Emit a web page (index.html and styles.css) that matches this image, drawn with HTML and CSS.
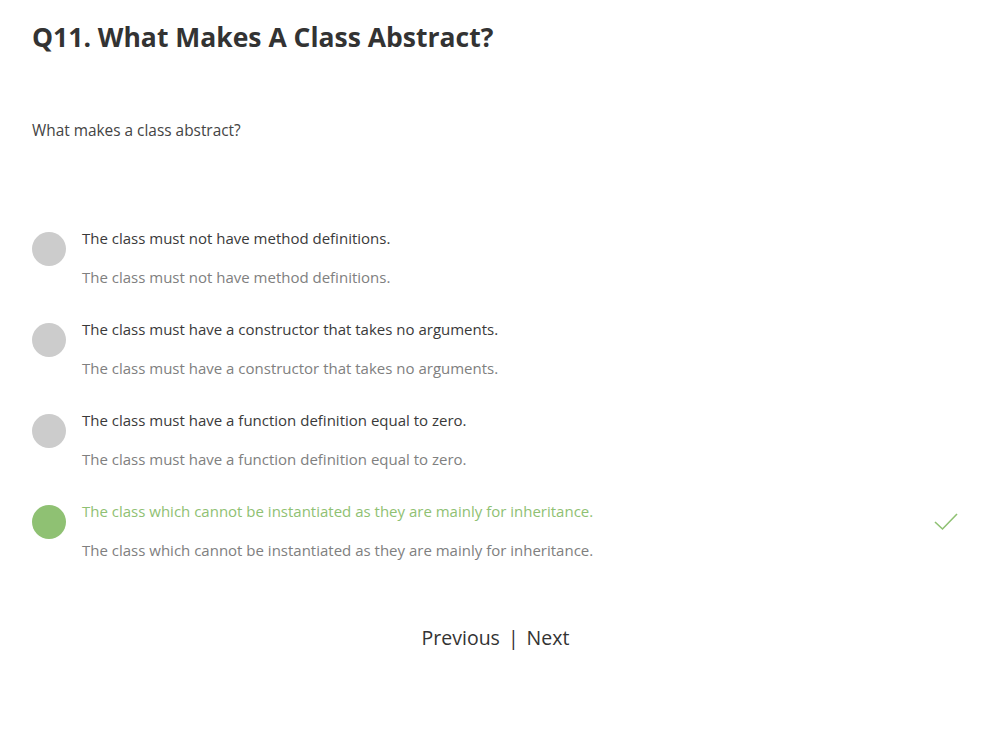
FILE: index.html
```html
<!DOCTYPE html>
<html lang="en">
<head>
<meta charset="utf-8">
<title>Q11. What Makes A Class Abstract?</title>
<link rel="stylesheet" href="styles.css">
</head>
<body>
<main class="quiz">
  <h1 class="title">Q11. What Makes A Class Abstract?</h1>
  <p class="question">What makes a class abstract?</p>
  <ul class="options">
    <li class="option">
      <span class="dot"></span>
      <div class="texts">
        <div class="answer">The class must not have method definitions.</div>
        <div class="explain">The class must not have method definitions.</div>
      </div>
    </li>
    <li class="option">
      <span class="dot"></span>
      <div class="texts">
        <div class="answer">The class must have a constructor that takes no arguments.</div>
        <div class="explain">The class must have a constructor that takes no arguments.</div>
      </div>
    </li>
    <li class="option">
      <span class="dot"></span>
      <div class="texts">
        <div class="answer">The class must have a function definition equal to zero.</div>
        <div class="explain">The class must have a function definition equal to zero.</div>
      </div>
    </li>
    <li class="option correct">
      <span class="dot"></span>
      <div class="texts">
        <div class="answer">The class which cannot be instantiated as they are mainly for inheritance.</div>
        <div class="explain">The class which cannot be instantiated as they are mainly for inheritance.</div>
      </div>
      <svg class="check" width="24" height="18" viewBox="0 0 24 18" aria-hidden="true">
        <path d="M1 9 L8.5 16 L23 1" fill="none" stroke="#8fc173" stroke-width="1.6"/>
      </svg>
    </li>
  </ul>
  <nav class="pager">
    <a class="pager-link" href="#">Previous</a>
    <span class="sep">|</span>
    <a class="pager-link" href="#">Next</a>
  </nav>
</main>
</body>
</html>
```
FILE: styles.css
```css
html, body {
  margin: 0;
  padding: 0;
  background: #fff;
}
body {
  font-family: "Open Sans", "Liberation Sans", sans-serif;
  color: #333;
}
.quiz {
  padding: 18px 32px 0 32px;
}
.title {
  margin: 0;
  font-size: 26.5px;
  line-height: 38px;
  font-weight: 700;
  color: #333;
}
.question {
  margin: 65px 0 0 0;
  font-size: 15.4px;
  line-height: 20px;
  color: #444;
}
.options {
  list-style: none;
  margin: 87px 0 0 0;
  padding: 0;
  display: flex;
  flex-direction: column;
  gap: 32px;
}
.option {
  display: flex;
  align-items: flex-start;
  gap: 16px;
}
.dot {
  flex: none;
  width: 34px;
  height: 34px;
  border-radius: 50%;
  background: #cccccc;
  margin-top: 4px;
}
.texts {
  flex: 1;
  display: flex;
  flex-direction: column;
  gap: 19px;
}
.answer {
  font-size: 15px;
  line-height: 20px;
  color: #3a3a3a;
}
.explain {
  font-size: 15px;
  line-height: 20px;
  color: #808080;
}
.correct .dot {
  background: #8fc173;
}
.correct .answer {
  color: #8fc173;
}
.check {
  flex: none;
  margin: 12px 1px 0 0;
}
.pager {
  margin-top: 64px;
  display: flex;
  justify-content: center;
  align-items: center;
  gap: 8px;
  font-size: 19.5px;
  line-height: 28px;
  color: #333;
}
.pager-link {
  color: #333;
  text-decoration: none;
}
.sep {
  color: #333;
}
```
